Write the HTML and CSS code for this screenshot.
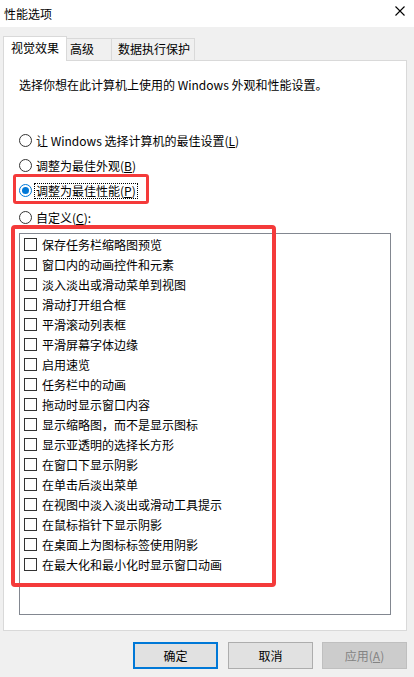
FILE: index.html
```html
<!DOCTYPE html>
<html lang="zh-CN">
<head>
<meta charset="utf-8">
<title>性能选项</title>
<link rel="stylesheet" href="styles.css">
</head>
<body>
<div class="window">
  <div class="titlebar">
    <span class="title">性能选项</span>
    <svg class="close" width="10" height="10" viewBox="0 0 10 10"><path d="M0.5 0.5 L9.5 9.5 M9.5 0.5 L0.5 9.5" stroke="#000" stroke-width="1.1" fill="none"/></svg>
  </div>
  <div class="body">
    <div class="tabs">
      <div class="tab tab-active">视觉效果</div>
      <div class="tab tab-2">高级</div>
      <div class="tab tab-3">数据执行保护</div>
    </div>
    <div class="panel">
      <p class="desc">选择你想在此计算机上使用的 Windows 外观和性能设置。</p>
      <div class="radios">
        <div class="radio-row"><span class="radio"></span><span class="rlabel">让 Windows 选择计算机的最佳设置(<u>L</u>)</span></div>
        <div class="radio-row"><span class="radio"></span><span class="rlabel">调整为最佳外观(<u>B</u>)</span></div>
        <div class="radio-row"><span class="radio checked"></span><span class="rlabel focus">调整为最佳性能(<u>P</u>)</span></div>
        <div class="radio-row"><span class="radio"></span><span class="rlabel">自定义(<u>C</u>):</span></div>
      </div>
      <div class="listbox">
        <div class="item"><span class="cb"></span>保存任务栏缩略图预览</div>
        <div class="item"><span class="cb"></span>窗口内的动画控件和元素</div>
        <div class="item"><span class="cb"></span>淡入淡出或滑动菜单到视图</div>
        <div class="item"><span class="cb"></span>滑动打开组合框</div>
        <div class="item"><span class="cb"></span>平滑滚动列表框</div>
        <div class="item"><span class="cb"></span>平滑屏幕字体边缘</div>
        <div class="item"><span class="cb"></span>启用速览</div>
        <div class="item"><span class="cb"></span>任务栏中的动画</div>
        <div class="item"><span class="cb"></span>拖动时显示窗口内容</div>
        <div class="item"><span class="cb"></span>显示缩略图，而不是显示图标</div>
        <div class="item"><span class="cb"></span>显示亚透明的选择长方形</div>
        <div class="item"><span class="cb"></span>在窗口下显示阴影</div>
        <div class="item"><span class="cb"></span>在单击后淡出菜单</div>
        <div class="item"><span class="cb"></span>在视图中淡入淡出或滑动工具提示</div>
        <div class="item"><span class="cb"></span>在鼠标指针下显示阴影</div>
        <div class="item"><span class="cb"></span>在桌面上为图标标签使用阴影</div>
        <div class="item"><span class="cb"></span>在最大化和最小化时显示窗口动画</div>
      </div>
    </div>
    <div class="buttons">
      <div class="btn btn-default">确定</div>
      <div class="btn">取消</div>
      <div class="btn btn-disabled">应用(<u>A</u>)</div>
    </div>
  </div>
  <div class="mark mark-1"></div>
  <div class="mark mark-2"></div>
</div>
</body>
</html>
```

FILE: styles.css
```css
* { box-sizing: border-box; }
html, body { margin: 0; padding: 0; }
body {
  font-family: "Noto Sans CJK SC", "Noto Sans", sans-serif;
  font-size: 12px;
  color: #000;
  background: #f0f0f0;
}
.window {
  position: relative;
  width: 414px;
  height: 677px;
  overflow: hidden;
  background: #f0f0f0;
}
.titlebar {
  height: 27px;
  background: #fff;
  display: flex;
  align-items: center;
  justify-content: space-between;
  padding: 0 9px 1px 4px;
}
.title { line-height: 17px; }
.close { display: block; margin-top: -4px; }

.body { padding: 9px 7px 0 3px; }

.tabs {
  display: flex;
  align-items: flex-end;
  height: 24px;
}
.tab {
  height: 22px;
  line-height: 20px;
  border: 1px solid #d9d9d9;
  border-bottom: none;
  background: #f0f0f0;
  white-space: nowrap;
}
.tab-active {
  width: 64px;
  height: 25px;
  margin-bottom: -1px;
  background: #fff;
  text-align: center;
  line-height: 21px;
  position: relative;
  z-index: 1;
}
.tab-2 { width: 45px; padding-left: 3px; border-left: none; }
.tab-3 { width: 83px; padding-left: 6px; border-left: none; }

.panel {
  background: #fff;
  border: 1px solid #d9d9d9;
  height: 571px;
  padding: 0 0 0 15px;
}
.desc {
  margin: 15px 0 0 0;
  line-height: 17px;
}
.radios { margin-top: 35px; }
.radio-row {
  display: flex;
  align-items: center;
  height: 25px;
}
.radio-row:last-child { height: 27px; padding-top: 2px; }
.radio {
  width: 13px;
  height: 13px;
  border: 1px solid #333;
  border-radius: 50%;
  margin-right: 3px;
  flex: none;
  display: flex;
  align-items: center;
  justify-content: center;
}
.radio.checked { border-color: #0078d7; }
.radio.checked::after {
  content: "";
  width: 7px;
  height: 7px;
  border-radius: 50%;
  background: #0078d7;
}
.rlabel { line-height: 14px; padding: 0 1px; }
.rlabel.focus { outline: 1px dotted #000; outline-offset: 0; }
u { text-decoration: underline; text-underline-offset: 1px; }

.listbox {
  margin-top: 3px;
  width: 372px;
  height: 382px;
  border: 1px solid #828790;
  padding: 0 0 0 4px;
}
.item {
  display: flex;
  align-items: center;
  height: 20px;
  white-space: nowrap;
}
.cb {
  width: 13px;
  height: 13px;
  border: 1px solid #333;
  margin-right: 5px;
  flex: none;
}

.buttons {
  display: flex;
  justify-content: flex-end;
  gap: 10px;
  margin-top: 11px;
}
.btn {
  width: 85px;
  height: 27px;
  border: 1px solid #adadad;
  background: #e1e1e1;
  display: flex;
  align-items: center;
  justify-content: center;
}
.btn-default { border: 2px solid #0078d7; }
.btn-disabled {
  background: #cccccc;
  border-color: #bfbfbf;
  color: #838383;
  margin-left: -1px;
}

.mark {
  position: absolute;
  border: 3px solid #f43a3a;
  border-radius: 3px;
  pointer-events: none;
}
.mark-1 { left: 13px; top: 174px; width: 136px; height: 30px; }
.mark-2 { left: 11px; top: 225px; width: 265px; height: 362px; border-width: 4px; border-radius: 4px; }
```
